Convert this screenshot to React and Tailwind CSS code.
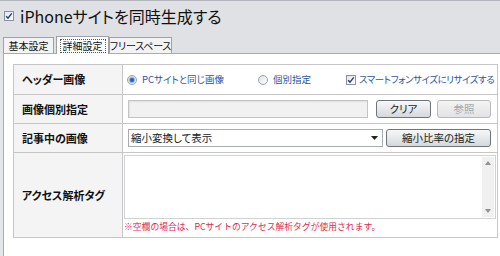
import React from 'react';

const font = "font-['Noto_Sans_CJK_JP','Liberation_Sans',sans-serif]";
const palt = "[font-feature-settings:'palt']";

function CheckBox() {
  return (
    <span className="inline-flex h-[10px] w-[10px] shrink-0 items-center justify-center border border-[#8c929c] bg-gradient-to-br from-[#e4e6ea] to-white">
      <svg width="8" height="8" viewBox="0 0 8 8">
        <path d="M1.2 4.2 L3 6.2 L6.8 1.4" fill="none" stroke="#2b3f86" strokeWidth="1.5" />
      </svg>
    </span>
  );
}

function Radio({ checked }) {
  return (
    <span className="inline-flex h-[10px] w-[10px] shrink-0 items-center justify-center rounded-full border border-[#9aa0a8] bg-gradient-to-br from-[#dfe2e6] to-white">
      {checked && <span className="h-[4px] w-[4px] rounded-full bg-[#2f5fb0] shadow-[0_0_1px_1px_#7fa6dc]" />}
    </span>
  );
}

function Btn({ children, disabled, className = '' }) {
  return (
    <div
      className={`flex h-[18px] items-center justify-center whitespace-nowrap rounded-[3px] border text-[10.5px] ${
        disabled
          ? 'border-[#b7b9bc] bg-gradient-to-b from-[#f4f4f4] to-[#e2e3e5] text-[#a4a6a9]'
          : 'border-[#6f737a] bg-gradient-to-b from-[#f7f8f9] to-[#d5d8dc] text-[#222]'
      } ${className}`}
    >
      {children}
    </div>
  );
}

function Row({ label, h, first, children }) {
  return (
    <div className={`flex ${h} ${first ? '' : 'border-t border-[#c6c6c6]'}`}>
      <div className="flex w-[109px] shrink-0 items-center whitespace-nowrap border-r border-[#c6c6c6] bg-[#f4f4f4] pl-[8px] text-[11px] font-bold text-[#111]">
        {label}
      </div>
      <div className="flex min-w-0 flex-1 items-center">{children}</div>
    </div>
  );
}

export default function App() {
  return (
    <div className={`h-[256px] w-[500px] overflow-hidden bg-white ${font} ${palt}`}>
      {/* Header */}
      <div className="flex h-[53px] flex-col border-t border-[#b3b7bd] bg-[#dfe1e5]">
        <div className="flex h-[26px] items-center gap-[6px] pl-[4px] pt-[3px]">
          <CheckBox />
          <span className="text-[16px] leading-none text-[#111]">iPhoneサイトを同時生成する</span>
        </div>
        <div className="mt-auto flex items-end gap-[2px] whitespace-nowrap pl-[3px] text-[10px] leading-none text-[#111]">
          <div className="flex h-[16px] w-[51px] items-center justify-center border border-b-0 border-[#9ea2a8] bg-[#f3f3f3]">
            基本設定
          </div>
          <div className="relative z-10 -mb-px flex h-[18px] w-[53px] items-center justify-center border border-b-0 border-[#9ea2a8] bg-white">
            <span className="border border-dotted border-[#555] px-[2px] py-[1px]">詳細設定</span>
          </div>
          <div className="-ml-[2px] flex h-[16px] w-[63px] items-center justify-center border border-b-0 border-[#9ea2a8] bg-[#f3f3f3] tracking-[-0.2px]">
            フリースペース
          </div>
        </div>
      </div>

      {/* Panel */}
      <div className="flex h-[203px]">
        <div className="w-[3px] bg-[#e4e6e9]" />
        <div className="flex-1 border-l border-t border-[#a9adb3] pl-[9px] pt-[10px]">
          <div className="w-[485px] border border-[#c6c6c6] text-[10.5px] text-[#222]">
            <Row label="ヘッダー画像" h="h-[29px]" first>
              <div className="flex items-center whitespace-nowrap pl-[4px] text-[9.5px] text-[#2d55a3]">
                <div className="flex w-[131px] items-center gap-[5px]">
                  <Radio checked />
                  <span>PCサイトと同じ画像</span>
                </div>
                <div className="flex w-[88px] items-center gap-[5px]">
                  <Radio />
                  <span>個別指定</span>
                </div>
                <div className="flex items-center gap-[3px]">
                  <CheckBox />
                  <span className="tracking-[-0.45px]">スマートフォンサイズにリサイズする</span>
                </div>
              </div>
            </Row>
            <Row label="画像個別指定" h="h-[29px]">
              <div className="flex items-center pl-[5px]">
                <div className="h-[18px] w-[240px] border border-[#c2c4c7] bg-[#f1f1f1] shadow-[inset_1px_1px_1px_#e0e0e0]" />
                <Btn className="ml-[8px] w-[55px]">クリア</Btn>
                <Btn disabled className="ml-[6px] w-[54px]">参照</Btn>
              </div>
            </Row>
            <Row label="記事中の画像" h="h-[29px]">
              <div className="flex items-center pl-[5px]">
                <div className="flex h-[18px] w-[255px] items-center justify-between border border-[#a8abaf] bg-white pl-[2px] pr-[4px]">
                  <span>縮小変換して表示</span>
                  <svg width="7" height="4" viewBox="0 0 7 4">
                    <path d="M0 0 H7 L3.5 4 Z" fill="#222" />
                  </svg>
                </div>
                <Btn className="ml-[3px] w-[105px]">縮小比率の指定</Btn>
              </div>
            </Row>
            <Row label="アクセス解析タグ" h="h-[85px]">
              <div className="flex h-full flex-1 flex-col pl-[1px] pr-[1px] pt-[2px]">
                <div className="flex h-[64px] border border-[#d0d2d5] bg-white">
                  <div className="flex-1" />
                  <div className="my-[1px] mr-[1px] flex w-[12px] flex-col items-center justify-between bg-[#f0f0f0] py-[4px]">
                    <svg width="6" height="4" viewBox="0 0 6 4">
                      <path d="M0 4 L3 0 L6 4 Z" fill="#8d9196" />
                    </svg>
                    <svg width="6" height="4" viewBox="0 0 6 4">
                      <path d="M0 0 L3 4 L6 0 Z" fill="#8d9196" />
                    </svg>
                  </div>
                </div>
                <div className="mt-[4px] whitespace-nowrap text-[8.8px] leading-none text-[#e0294f] [font-feature-settings:normal]">
                  ※空欄の場合は、PCサイトのアクセス解析タグが使用されます。
                </div>
              </div>
            </Row>
          </div>
        </div>
      </div>
    </div>
  );
}
